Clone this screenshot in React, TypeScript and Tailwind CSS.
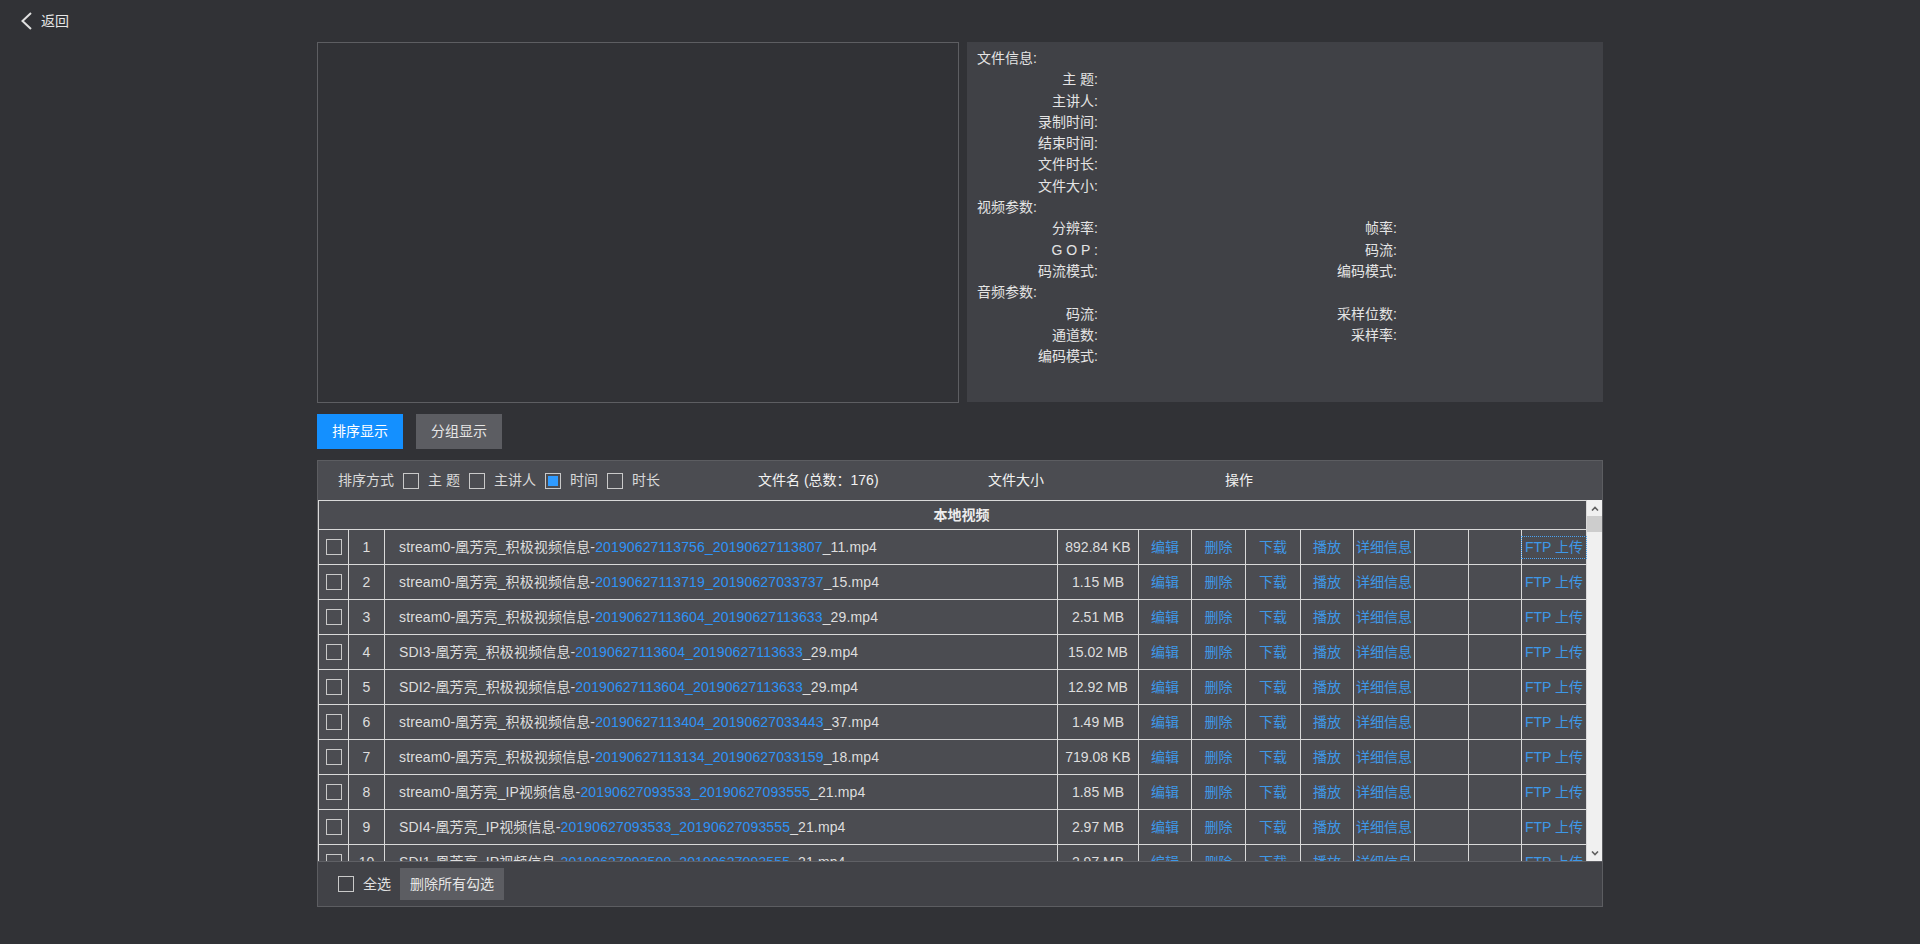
import React from "react";

type FileRow = {
  n: number;
  pre: string;
  mid: string;
  suf: string;
  size: string;
};

const rows: FileRow[] = [
  { n: 1, pre: "stream0-凰芳亮_积极视频信息-", mid: "20190627113756_20190627113807", suf: "_11.mp4", size: "892.84 KB" },
  { n: 2, pre: "stream0-凰芳亮_积极视频信息-", mid: "20190627113719_20190627033737", suf: "_15.mp4", size: "1.15 MB" },
  { n: 3, pre: "stream0-凰芳亮_积极视频信息-", mid: "20190627113604_20190627113633", suf: "_29.mp4", size: "2.51 MB" },
  { n: 4, pre: "SDI3-凰芳亮_积极视频信息-", mid: "20190627113604_20190627113633", suf: "_29.mp4", size: "15.02 MB" },
  { n: 5, pre: "SDI2-凰芳亮_积极视频信息-", mid: "20190627113604_20190627113633", suf: "_29.mp4", size: "12.92 MB" },
  { n: 6, pre: "stream0-凰芳亮_积极视频信息-", mid: "20190627113404_20190627033443", suf: "_37.mp4", size: "1.49 MB" },
  { n: 7, pre: "stream0-凰芳亮_积极视频信息-", mid: "20190627113134_20190627033159", suf: "_18.mp4", size: "719.08 KB" },
  { n: 8, pre: "stream0-凰芳亮_IP视频信息-", mid: "20190627093533_20190627093555", suf: "_21.mp4", size: "1.85 MB" },
  { n: 9, pre: "SDI4-凰芳亮_IP视频信息-", mid: "20190627093533_20190627093555", suf: "_21.mp4", size: "2.97 MB" },
  { n: 10, pre: "SDI1-凰芳亮_IP视频信息-", mid: "20190627093509_20190627093555", suf: "_21.mp4", size: "2.97 MB" },
];

const actions = ["编辑", "删除", "下载", "播放", "详细信息"];

const Checkbox = ({ checked = false }: { checked?: boolean }) => (
  <span className="flex h-4 w-4 shrink-0 border border-[#c9c9c9] p-[2px]">
    {checked && <span className="block h-full w-full bg-[#2f9bff]" />}
  </span>
);

const Label = ({ children }: { children: React.ReactNode }) => (
  <div className="text-right whitespace-pre">{children}</div>
);

const InfoPanel = () => (
  <div className="h-[360px] flex-1 bg-[#404146] pl-[10px] pt-[6px] text-[14px] leading-[21.3px] text-[#e4e4e4]">
    <div className="grid grid-cols-[121px_178px_121px_1fr]">
      <div className="col-span-4">文件信息:</div>
      <Label>主 题:</Label>
      <div className="col-span-3" />
      <Label>主讲人:</Label>
      <div className="col-span-3" />
      <Label>录制时间:</Label>
      <div className="col-span-3" />
      <Label>结束时间:</Label>
      <div className="col-span-3" />
      <Label>文件时长:</Label>
      <div className="col-span-3" />
      <Label>文件大小:</Label>
      <div className="col-span-3" />
      <div className="col-span-4">视频参数:</div>
      <Label>分辨率:</Label>
      <div />
      <Label>帧率:</Label>
      <div />
      <Label>G O P :</Label>
      <div />
      <Label>码流:</Label>
      <div />
      <Label>码流模式:</Label>
      <div />
      <Label>编码模式:</Label>
      <div />
      <div className="col-span-4">音频参数:</div>
      <Label>码流:</Label>
      <div />
      <Label>采样位数:</Label>
      <div />
      <Label>通道数:</Label>
      <div />
      <Label>采样率:</Label>
      <div />
      <Label>编码模式:</Label>
      <div className="col-span-3" />
    </div>
  </div>
);

const cols =
  "grid grid-cols-[30px_36px_673px_81px_53px_54px_55px_53px_61px_54px_53px_65px]";

const Row = ({ row }: { row: FileRow }) => (
  <div className={`${cols} h-[35px] shrink-0 border-b border-l border-[#d9d9d9]`}>
    <div className="flex items-center justify-center border-r border-[#d9d9d9]">
      <Checkbox />
    </div>
    <div className="flex items-center justify-center border-r border-[#d9d9d9]">{row.n}</div>
    <div className="flex items-center border-r border-[#d9d9d9] pl-[14px] tracking-[0.13px] whitespace-nowrap">
      {row.pre}
      <span className="text-[#2f93f6]">{row.mid}</span>
      {row.suf}
    </div>
    <div className="flex items-center justify-center border-r border-[#d9d9d9]">{row.size}</div>
    {actions.map((a) => (
      <div
        key={a}
        className="flex items-center justify-center border-r border-[#d9d9d9] whitespace-nowrap text-[#3e98e8]"
      >
        {a}
      </div>
    ))}
    <div className="border-r border-[#d9d9d9]" />
    <div className="border-r border-[#d9d9d9]" />
    <div className="flex items-center justify-center border-r border-[#d9d9d9]">
      <span
        className={
          row.n === 1
            ? "block w-full text-center whitespace-nowrap text-[#3e98e8] outline-1 outline-dotted outline-[#4aa3f2]"
            : "block w-full text-center whitespace-nowrap text-[#3e98e8]"
        }
      >
        FTP 上传
      </span>
    </div>
  </div>
);

const Scrollbar = () => (
  <div className="flex h-[361px] w-[15px] flex-col bg-[#f0f0f0]">
    <div className="flex h-[16px] items-center justify-center">
      <svg width="8" height="5" viewBox="0 0 8 5">
        <path d="M1 4.5 L4 1.5 L7 4.5" fill="none" stroke="#606060" strokeWidth="1.6" />
      </svg>
    </div>
    <div className="h-[16px] bg-[#cdcdcd]" />
    <div className="flex-1" />
    <div className="flex h-[16px] items-center justify-center">
      <svg width="8" height="5" viewBox="0 0 8 5">
        <path d="M1 0.5 L4 3.5 L7 0.5" fill="none" stroke="#606060" strokeWidth="1.6" />
      </svg>
    </div>
  </div>
);

export default function App() {
  return (
    <div className="min-h-screen bg-[#313236] font-['Liberation_Sans','Noto_Sans_CJK_SC',sans-serif] text-[14px] text-[#dedede]">
      <div className="flex h-[42px] items-center pl-5">
        <svg width="12" height="18" viewBox="0 0 12 18">
          <path d="M11 1 L2.5 9 L11 17" fill="none" stroke="#e0e0e0" strokeWidth="2" />
        </svg>
        <span className="ml-[9px] text-[#e6e6e6]">返回</span>
      </div>

      <div className="mx-auto w-[1286px]">
        <div className="flex gap-2">
          <div className="h-[361px] w-[642px] border border-[#5d5e62]" />
          <InfoPanel />
        </div>

        <div className="mt-[11px] flex gap-[13px]">
          <button className="h-[35px] w-[86px] bg-[#1490ff] text-white">排序显示</button>
          <button className="h-[35px] w-[86px] bg-[#5c5d62] text-[#e6e6e6]">分组显示</button>
        </div>

        <div className="mt-[11px] border border-[#5c5d61] bg-[#4b4c51]">
          <div className="flex h-[39px] items-center pl-[20px]">
            <div className="flex w-[420px] items-center gap-[9px] text-[#d9d9d9]">
              <span>排序方式</span>
              <Checkbox />
              <span>主 题</span>
              <Checkbox />
              <span>主讲人</span>
              <Checkbox checked />
              <span>时间</span>
              <Checkbox />
              <span>时长</span>
            </div>
            <div className="w-[230px] text-[#f2f2f2]">文件名 (总数：176)</div>
            <div className="w-[237px] text-[#f2f2f2]">文件大小</div>
            <div className="text-[#f2f2f2]">操作</div>
          </div>

          <div className="flex">
            <div className="flex h-[361px] w-[1269px] flex-col overflow-hidden border-t border-[#d9d9d9]">
              <div className="flex h-[29px] shrink-0 items-center justify-center border-b border-l border-r border-[#d9d9d9] pl-[18px] font-bold text-[#ececec]">
                本地视频
              </div>
              {rows.map((r) => (
                <Row key={r.n} row={r} />
              ))}
            </div>
            <Scrollbar />
          </div>

          <div className="flex h-[45px] items-center gap-[9px] border-t border-[#5f6065] bg-[#414247] pl-[20px]">
            <Checkbox />
            <span className="text-[#e0e0e0]">全选</span>
            <button className="h-[32px] bg-[#5c5d62] px-[10px] text-[#e6e6e6]">删除所有勾选</button>
          </div>
        </div>
      </div>
    </div>
  );
}
